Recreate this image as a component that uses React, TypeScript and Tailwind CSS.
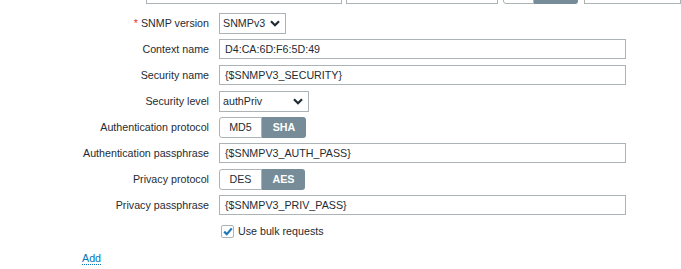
import React from "react";

const font = { fontFamily: '"Liberation Sans", Arial, sans-serif' };

function Chevron({ className = "" }: { className?: string }) {
  return (
    <svg width="10" height="7" viewBox="0 0 10 7" className={className}>
      <polyline points="1,1.2 5,5.2 9,1.2" fill="none" stroke="#1f2c33" strokeWidth="2.2" strokeLinejoin="miter" />
    </svg>
  );
}

function Row({ label, required, children }: { label: string; required?: boolean; children: React.ReactNode }) {
  return (
    <div className="flex h-[26px] items-center">
      <div className="w-[209px] shrink-0 text-right text-[10.7px] text-[#1f2c33] leading-none">
        {required && <span className="text-[#e33734] mr-[3px]">*</span>}
        {label}
      </div>
      <div className="ml-[10px] flex items-center">{children}</div>
    </div>
  );
}

function TextInput({ value }: { value: string }) {
  return (
    <div className="w-[407px] h-[20px] border border-[#acb3b7] bg-white flex items-center pl-[5px] text-[10.7px] text-[#1f2c33]">
      {value}
    </div>
  );
}

function Select({ value, width }: { value: string; width: string }) {
  return (
    <div className={`${width} h-[21px] border border-[#acb3b7] bg-white flex items-center justify-between pl-[3px] pr-[5px] text-[10.7px] text-[#1f2c33]`}>
      <span>{value}</span>
      <Chevron />
    </div>
  );
}

function Segmented({ a, b, wa, wb }: { a: string; b: string; wa: string; wb: string }) {
  return (
    <div className="flex h-[21px] text-[10.7px]">
      <div className={`${wa} h-full border border-[#acb3b7] rounded-l-[3px] bg-white flex items-center justify-center text-[#1f2c33]`}>{a}</div>
      <div className={`${wb} h-full bg-[#768d99] rounded-r-[3px] flex items-center justify-center text-white font-bold`}>{b}</div>
    </div>
  );
}

export default function App() {
  return (
    <div className="w-[681px] h-[269px] bg-white overflow-hidden" style={font}>
      {/* partial row of previous interface */}
      <div className="h-[4px] overflow-hidden flex">
        <div className="ml-[146px] w-[203px] h-[24px] -mt-[20px] border border-[#acb3b7]" />
        <div className="ml-[4px] w-[158px] h-[24px] -mt-[20px] border border-[#acb3b7]" />
        <div className="ml-[5px] flex -mt-[20px] h-[24px]">
          <div className="w-[31px] h-full border border-[#acb3b7] rounded-bl-[3px]" />
          <div className="w-[44px] h-full bg-[#768d99] rounded-br-[3px]" />
        </div>
        <div className="ml-[6px] w-[100px] h-[24px] -mt-[20px] border border-[#acb3b7]" />
      </div>

      <div className="mt-[6px] flex flex-col">
        <Row label="SNMP version" required>
          <Select value="SNMPv3" width="w-[67px]" />
        </Row>
        <Row label="Context name">
          <TextInput value="D4:CA:6D:F6:5D:49" />
        </Row>
        <Row label="Security name">
          <TextInput value="{$SNMPV3_SECURITY}" />
        </Row>
        <Row label="Security level">
          <Select value="authPriv" width="w-[90px]" />
        </Row>
        <Row label="Authentication protocol">
          <Segmented a="MD5" b="SHA" wa="w-[43px]" wb="w-[44px]" />
        </Row>
        <Row label="Authentication passphrase">
          <TextInput value="{$SNMPV3_AUTH_PASS}" />
        </Row>
        <Row label="Privacy protocol">
          <Segmented a="DES" b="AES" wa="w-[43px]" wb="w-[43px]" />
        </Row>
        <Row label="Privacy passphrase">
          <TextInput value="{$SNMPV3_PRIV_PASS}" />
        </Row>
        <div className="flex h-[26px] items-center">
          <div className="ml-[221px] w-[13px] h-[13px] border border-[#acb3b7] rounded-[2px] bg-white flex items-center justify-center">
            <svg width="10" height="9" viewBox="0 0 10 9">
              <polyline points="1.2,4.6 3.8,7.2 8.8,1.4" fill="none" stroke="#1e78b8" strokeWidth="2.2" />
            </svg>
          </div>
          <span className="ml-[4px] text-[10.7px] text-[#1f2c33]">Use bulk requests</span>
        </div>
        <div className="mt-[1px] ml-[82px]">
          <span className="text-[10.7px] text-[#0275b8] border-b border-dotted border-[#0275b8] leading-[12px] inline-block">Add</span>
        </div>
      </div>
    </div>
  );
}
